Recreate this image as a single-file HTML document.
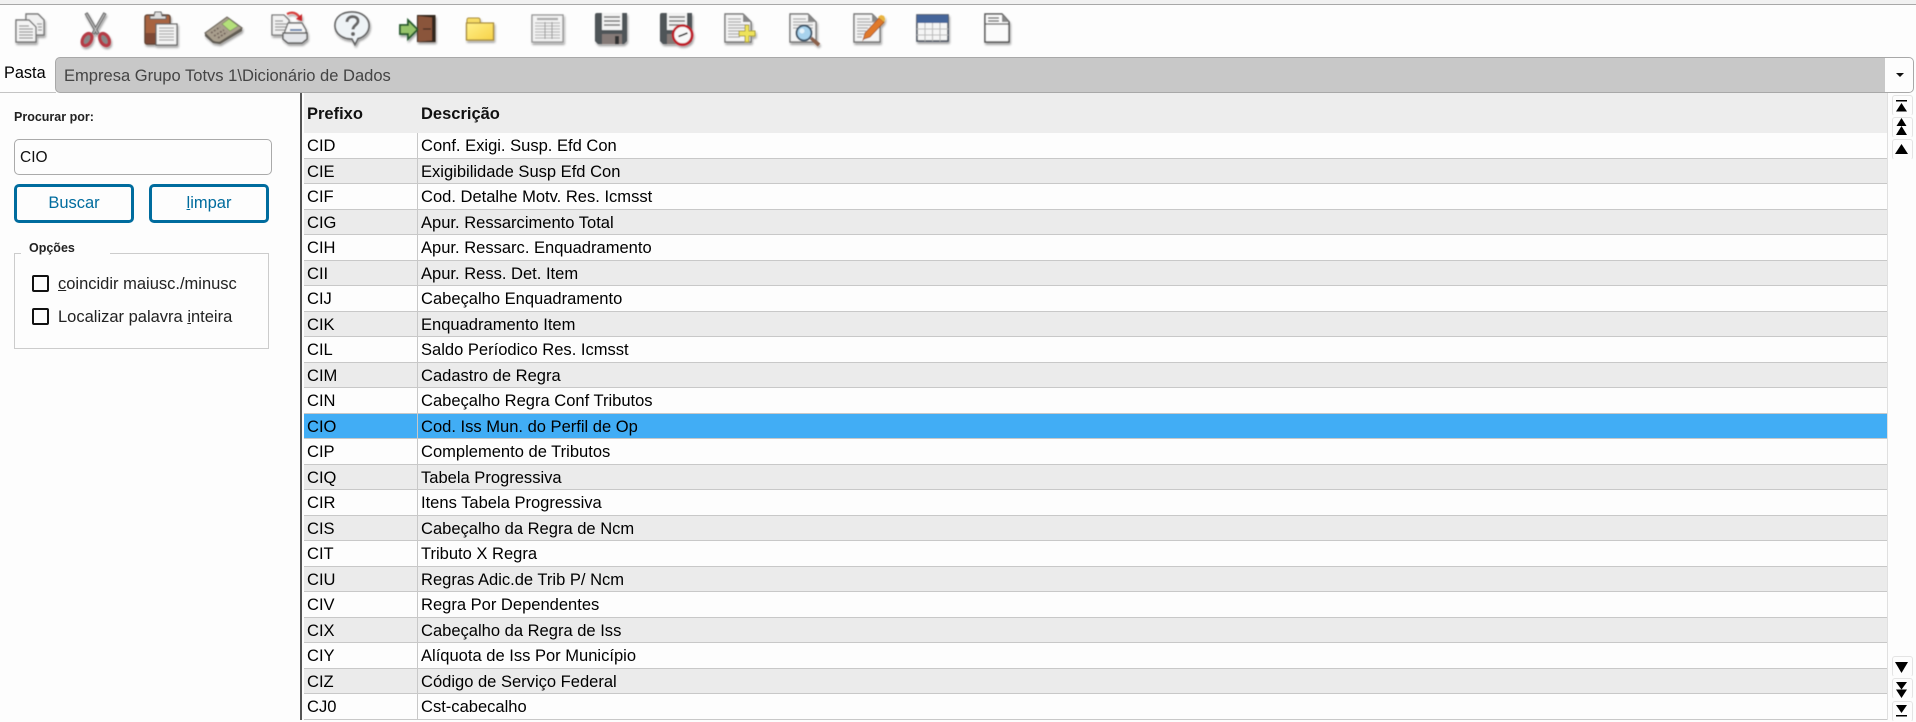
<!DOCTYPE html>
<html lang="pt"><head><meta charset="utf-8"><title>Dicionário de Dados</title>
<style>
*{box-sizing:border-box}
html,body{margin:0;padding:0;width:1916px;height:720px;overflow:hidden;background:#fdfdfd;font-family:"Liberation Sans",sans-serif;color:#111}
.a{position:absolute}
#rows{position:absolute;left:304px;top:133px;width:1583px}
.r{height:25.5px;position:relative;border-bottom:1px solid #c8c8c8;background:#fdfdfd;font-size:16.55px;line-height:25px;white-space:nowrap;color:#000}
.r.g{background:#ebebeb}
.r.s{background:#41adf5}
.r b{font-weight:normal;position:absolute;left:3px;top:0}
.r i{font-style:normal;position:absolute;left:117px;top:0}
.r:after{content:"";position:absolute;left:113px;top:0;bottom:-1px;width:1px;background:#c8c8c8}
.btn{position:absolute;top:184px;height:39px;border:3px solid #006c9e;border-radius:5px;color:#006c9e;font-size:16.5px;line-height:33px;text-align:center;background:#fdfdfd}
.cb{position:absolute;left:32px;width:17px;height:17px;border:2px solid #111;border-radius:2px;background:#fdfdfd}
.lb{position:absolute;left:58px;font-size:16.5px;line-height:18px;color:#222}
.sb{position:absolute;left:1892px;width:21px;height:21px;border:1px solid #e4e4e4;border-bottom-color:#fdfdfd;border-radius:3px;background:#fdfdfd}
</style></head><body>
<div class="a" style="left:0;top:0;width:1916px;height:4px;background:#f1f1f1"></div>
<div class="a" style="left:0;top:4px;width:1916px;height:1px;background:#a8a8a8"></div>

<svg class="a" style="left:0;top:0" width="1050" height="56" viewBox="0 0 1050 56">
<defs>
<filter id="s" x="-20%" y="-20%" width="150%" height="150%"><feGaussianBlur in="SourceGraphic" stdDeviation=".55" result="b"/><feGaussianBlur in="SourceAlpha" stdDeviation="1.3" result="c"/><feOffset in="c" dx="1" dy="2" result="d"/><feComponentTransfer in="d" result="e"><feFuncA type="linear" slope=".4"/></feComponentTransfer><feMerge><feMergeNode in="e"/><feMergeNode in="b"/></feMerge></filter>
<linearGradient id="fy" x1="0" y1="0" x2="1" y2="1"><stop offset="0" stop-color="#fff08a"/><stop offset="1" stop-color="#f7d247"/></linearGradient>
</defs>
<g filter="url(#s)">
<!-- copy -->
<path d="M26 14h12l6 6v15H26z" fill="#f1f1f1" stroke="#777" stroke-width="1.4"/>
<path d="M16 20h13l7 7v15H16z" fill="#f4f4f4" stroke="#777" stroke-width="1.4"/>
<path d="M19 26h10M19 29h14M19 32h14M19 35h14M19 38h14M37 24h5M38 27h4M38 30h4" stroke="#999" stroke-width="1.3"/>
<!-- scissors -->
<path d="M86 13l12 21M105 13L93 34" stroke="#6f6f6f" stroke-width="3.400" fill="none"/>
<path d="M86.500 14l11 19M104.500 14l-11 19" stroke="#c4c4c4" stroke-width=".9" fill="none"/>
<ellipse cx="87" cy="39.500" rx="4.200" ry="6.500" transform="rotate(30 87 39.500)" fill="#888" stroke="#b53b45" stroke-width="3.200"/>
<ellipse cx="104.500" cy="39.500" rx="4.200" ry="6.500" transform="rotate(-30 104.500 39.500)" fill="#888" stroke="#b53b45" stroke-width="3.200"/>
<!-- clipboard -->
<rect x="145" y="15" width="25" height="29" rx="2" fill="#a86440" stroke="#5a4032" stroke-width="1.3"/>
<rect x="145.600" y="33" width="24" height="10.500" fill="#7e4a34"/>
<path d="M150 19v-3h4l1-4h6l1 4h4v3z" fill="#ddd" stroke="#666" stroke-width="1.1"/>
<path d="M156 24h21v21h-21z" fill="#f5f5f5" stroke="#666" stroke-width="1.3"/>
<path d="M159 28h15M159 31h15M159 34h15M159 37h15M159 40h15" stroke="#aaa" stroke-width="1.2"/>
<!-- calculator -->
<path d="M205 33l22-16 15 11-22 14q-4 1-7-1z" fill="#a89e8d" stroke="#6f695e" stroke-width="1.100"/>
<path d="M205 33l8 8 7 1 22-14v3l-22 13-7-1-8-7z" fill="#615b52"/>
<path d="M222 24l7-5 9 7-8 5z" fill="#b4e07a" stroke="#7e8e5e" stroke-width=".7"/>
<path d="M211 33l9-6M214 36l10-6M218 38l9-6" stroke="#74665d" stroke-width="1.700" stroke-dasharray="2 1.500"/>
<!-- printer -->
<path d="M272 15h12l5 5v15h-17z" fill="#f2f2f2" stroke="#777" stroke-width="1.300"/>
<path d="M275 21h8M275 24h12M275 27h12M275 30h10" stroke="#999" stroke-width="1.200"/>
<path d="M287 14q8-4 13 4" fill="none" stroke="#d8403c" stroke-width="2.200"/><path d="M296 19l6 2 0-7z" fill="#c8282b"/>
<path d="M288 23h14l4 7v7h-23l2-6z" fill="#f6f6f6" stroke="#6f6f6f" stroke-width="1.400"/>
<path d="M283 33h24v6l-5 4h-14l-5-4z" fill="#e4e6ea" stroke="#5f5f5f" stroke-width="1.400"/>
<path d="M290 30h12" stroke="#5a7aa8" stroke-width="1.800"/>
<!-- help -->
<path d="M352 12c10 0 17 6 17 13.500s-6 12-11 13l-3 6-3-5.500c-9 0-17-5-17-13.500S342 12 352 12z" fill="#eef3f6" stroke="#666" stroke-width="1.700"/>
<path d="M347 22c0-7 11-7 11-1 0 4-5 4-5 8.500" fill="none" stroke="#666" stroke-width="3"/><circle cx="353" cy="34" r="2" fill="#666"/>
<!-- door -->
<path d="M417 15h18.500v27h-18.500z" fill="#33261f"/>
<path d="M418 16l14 1.500v23l-14 1z" fill="#8a553b"/>
<path d="M423 29h8" stroke="#3e2a20" stroke-width="1.200"/>
<path d="M400 25h8v-5l9.500 9.500-9.500 9.500v-5h-8z" fill="#95c46b" stroke="#255a2d" stroke-width="1.800"/>
<!-- folder -->
<path d="M467 24v-4q0-2 2-2h9q2 0 2 2v4z" fill="#f6dc66" stroke="#a88b3a"/>
<path d="M466.500 23h27v17h-27z" fill="url(#fy)" stroke="#a88b3a" stroke-width="1.300"/>
<!-- table -->
<rect x="532" y="15" width="31" height="27" fill="#f3f3f3" stroke="#999" stroke-width="1.400"/>
<path d="M537 19h21" stroke="#aaa" stroke-width="2.200"/>
<path d="M535 23h25M535 26h25M535 29h25M535 32h25M535 35h25M535 38h25" stroke="#bbb" stroke-width="1.200"/>
<path d="M545 22v17M552 22v17" stroke="#999" stroke-width="1"/>
<!-- floppy -->
<path d="M595 15q0-2 2-2h30v28l-3 3h-26l-3-3z" fill="#505558"/>
<rect x="602" y="13" width="20" height="17" fill="#f3f3f3"/>
<path d="M604 17h16M604 21h16M604 25h16" stroke="#777" stroke-width="1.400"/>
<rect x="602" y="34" width="20" height="10" fill="#857a77"/><rect x="615" y="36" width="4" height="8" fill="#333"/>
<!-- floppy clock -->
<path d="M660 15q0-2 2-2h30v28l-3 3h-26l-3-3z" fill="#505558"/>
<rect x="667" y="13" width="20" height="17" fill="#f3f3f3"/>
<path d="M669 17h16M669 21h16M669 25h16" stroke="#777" stroke-width="1.400"/>
<rect x="667" y="34" width="14" height="10" fill="#857a77"/>
<circle cx="682.500" cy="35" r="9.500" fill="#f8f8f8" stroke="#c01c26" stroke-width="2.500"/>
<path d="M682.500 35l5-2M682.500 35l-4 1.500" stroke="#222" stroke-width="1.500"/>
<!-- page plus -->
<path d="M725 14h18l8 8v20h-26z" fill="#f4f4f4" stroke="#777" stroke-width="1.400"/>
<path d="M743 14v8h8z" fill="#888"/>
<path d="M728 19h13M728 22h13M728 25h20M728 28h20M728 31h20M728 34h14M728 37h12" stroke="#aaa" stroke-width="1.200"/>
<path d="M745 25h4v6h6v5h-6v6h-4v-6h-6v-5h6z" fill="#eee35a" stroke="#a89c3d"/>
<!-- page magnify -->
<path d="M790 14h18l8 8v20h-26z" fill="#f4f4f4" stroke="#777" stroke-width="1.400"/>
<path d="M808 14v8h8z" fill="#888"/>
<path d="M793 19h13M793 22h20M793 25h20M793 28h20" stroke="#aaa" stroke-width="1.200"/>
<path d="M811 38l8 7" stroke="#8a5f48" stroke-width="3.500"/>
<circle cx="804" cy="33" r="7.500" fill="#a8d3ee" stroke="#3f566b" stroke-width="2"/>
<circle cx="802" cy="31" r="2.500" fill="#e6f3fb"/>
<!-- page pencil -->
<path d="M854 14h18l8 8v20h-26z" fill="#f4f4f4" stroke="#777" stroke-width="1.400"/>
<path d="M872 14v8h8z" fill="#888"/>
<path d="M857 19h13M857 22h20M857 25h14M857 28h11M857 31h9M857 34h7M857 37h5" stroke="#aaa" stroke-width="1.200"/>
<path d="M864 39l-1 1 2-7 14-15 5 4-14 15z" fill="#e0792b" stroke="#a0531f" stroke-width=".8"/>
<path d="M878 17l3-2 3 1 1 3-1 3z" fill="#e9b43f"/>
<!-- blue table -->
<rect x="917" y="15" width="31" height="26" fill="#f5f5f5" stroke="#4d5560" stroke-width="1.600"/>
<rect x="917" y="15" width="31" height="8" fill="#44659a"/>
<path d="M917 29h31M917 35h31M925 23v18M932.500 23v18M940 23v18" stroke="#bbb" stroke-width="1.100"/>
<!-- page -->
<path d="M985 14h17l7 8v20h-24z" fill="#fbfbfb" stroke="#555" stroke-width="1.500"/>
<path d="M1002 14v8h7z" fill="#888"/>
<path d="M988 18h11M988 21h11" stroke="#555" stroke-width="1.300"/><path d="M985 24h24" stroke="#555" stroke-width="1.300"/>
</g>
</svg>

<!-- tab bar -->
<div class="a" style="left:4px;top:62px;font-size:16.300px;line-height:22px;color:#000">Pasta</div>
<div class="a" style="left:0;top:92px;width:56px;height:1px;background:#c4c4c4"></div>
<div class="a" style="left:55px;top:57px;width:1859px;height:36px;background:#c8c8c8;border:1px solid #a8a8a8;border-radius:5px;overflow:hidden">
  <div class="a" style="left:8px;top:7px;font-size:16.550px;line-height:21px;color:#444">Empresa Grupo Totvs 1\Dicionário de Dados</div>
  <div class="a" style="left:1829px;top:0;width:29px;height:34px;background:#fdfdfd"></div>
</div>
<div class="a" style="left:1896px;top:73px;width:0;height:0;border-left:4.500px solid transparent;border-right:4.500px solid transparent;border-top:4.500px solid #111"></div>

<!-- left panel -->
<div class="a" style="left:300px;top:93px;width:2px;height:627px;background:#555"></div>
<div class="a" style="left:14px;top:108px;font-size:12.500px;font-weight:bold;line-height:18px;color:#222">Procurar por:</div>
<div class="a" style="left:14px;top:139px;width:258px;height:36px;border:1px solid #aaa;border-radius:5px;background:#fdfdfd;font-size:15.500px;line-height:36px;padding-left:5px;color:#111">CIO</div>
<div class="btn" style="left:14px;width:120px">Buscar</div>
<div class="btn" style="left:149px;width:120px"><u>l</u>impar</div>
<div class="a" style="left:14px;top:253px;width:255px;height:96px;border:1px solid #ccc"></div>
<div class="a" style="left:21px;top:245px;width:89px;height:18px;background:#fdfdfd"></div>
<div class="a" style="left:29px;top:239px;font-size:12.500px;font-weight:bold;line-height:18px;color:#222">Opções</div>
<div class="cb" style="top:275px"></div>
<div class="lb" style="top:275px"><u>c</u>oincidir maiusc./minusc</div>
<div class="cb" style="top:308px"></div>
<div class="lb" style="top:308px">Localizar palavra <u>i</u>nteira</div>

<!-- grid -->
<div class="a" style="left:304px;top:93px;width:1583px;height:40px;background:#ededed"></div>
<div class="a" style="left:307px;top:104px;font-size:16.500px;font-weight:bold;line-height:20px;color:#111">Prefixo</div>
<div class="a" style="left:421px;top:104px;font-size:16.500px;font-weight:bold;line-height:20px;color:#111">Descrição</div>
<div class="a" style="left:1887px;top:93px;width:1px;height:627px;background:#e0e0e0"></div>
<div id="rows">
<div class="r"><b>CID</b><i>Conf. Exigi. Susp. Efd Con</i></div>
<div class="r g"><b>CIE</b><i>Exigibilidade Susp Efd Con</i></div>
<div class="r"><b>CIF</b><i>Cod. Detalhe Motv. Res. Icmsst</i></div>
<div class="r g"><b>CIG</b><i>Apur. Ressarcimento Total</i></div>
<div class="r"><b>CIH</b><i>Apur. Ressarc. Enquadramento</i></div>
<div class="r g"><b>CII</b><i>Apur. Ress. Det. Item</i></div>
<div class="r"><b>CIJ</b><i>Cabeçalho Enquadramento</i></div>
<div class="r g"><b>CIK</b><i>Enquadramento Item</i></div>
<div class="r"><b>CIL</b><i>Saldo Períodico Res. Icmsst</i></div>
<div class="r g"><b>CIM</b><i>Cadastro de Regra</i></div>
<div class="r"><b>CIN</b><i>Cabeçalho Regra Conf Tributos</i></div>
<div class="r s"><b>CIO</b><i>Cod. Iss Mun. do Perfil de Op</i></div>
<div class="r"><b>CIP</b><i>Complemento de Tributos</i></div>
<div class="r g"><b>CIQ</b><i>Tabela Progressiva</i></div>
<div class="r"><b>CIR</b><i>Itens Tabela Progressiva</i></div>
<div class="r g"><b>CIS</b><i>Cabeçalho da Regra de Ncm</i></div>
<div class="r"><b>CIT</b><i>Tributo X Regra</i></div>
<div class="r g"><b>CIU</b><i>Regras Adic.de Trib P/ Ncm</i></div>
<div class="r"><b>CIV</b><i>Regra Por Dependentes</i></div>
<div class="r g"><b>CIX</b><i>Cabeçalho da Regra de Iss</i></div>
<div class="r"><b>CIY</b><i>Alíquota de Iss Por Município</i></div>
<div class="r g"><b>CIZ</b><i>Código de Serviço Federal</i></div>
<div class="r"><b>CJ0</b><i>Cst-cabecalho</i></div>
</div>

<!-- scroll buttons -->
<div class="sb" style="top:95px"></div><div class="sb" style="top:117px"></div><div class="sb" style="top:139px"></div>
<div class="sb" style="top:656px"></div><div class="sb" style="top:678px"></div><div class="sb" style="top:701px"></div>
<svg class="a" style="left:1892px;top:90px" width="24" height="630" viewBox="0 0 24 630">
<path d="M4 10h11v1.500H4zM9.500 13l5.500 8.500H4z" fill="#000"/>
<path d="M9.500 28l5 8h-10zM9.500 36l5.500 9H4z" fill="#000"/>
<path d="M9.500 54l6.500 10H3z" fill="#000"/>
<path d="M3 572h13l-6.500 11z" fill="#000"/>
<path d="M4 592h11l-5.500 7.500zM4 599.500h11l-5.500 8.500z" fill="#000"/>
<path d="M4 615h11l-5.500 8zM4 625h11v1.500H4z" fill="#000"/>
</svg>
</body></html>
